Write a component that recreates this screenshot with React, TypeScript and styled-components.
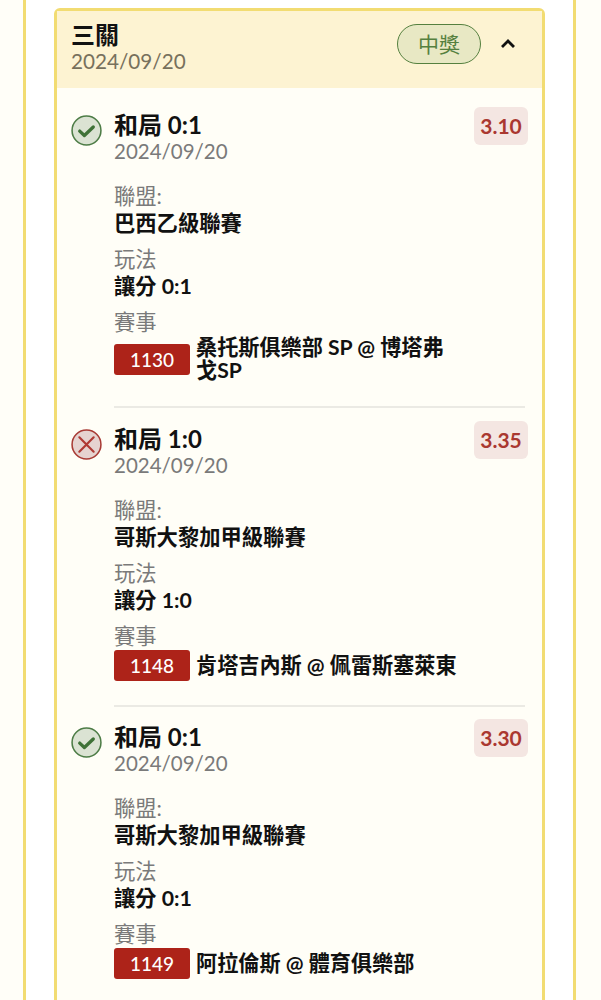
import React from "react";
import styled, { createGlobalStyle } from "styled-components";

const GlobalStyle = createGlobalStyle`
  html, body {
    margin: 0;
    padding: 0;
    background: #fffef8;
    overflow: hidden;
  }
  body {
    font-family: "Lato", "Noto Sans CJK TC", sans-serif;
    color: #111;
  }
`;

interface Bet {
  pick: string;
  date: string;
  league: string;
  play: string;
  code: string;
  match: string;
  odds: string;
  won: boolean;
}

const bets: Bet[] = [
  {
    pick: "和局 0:1",
    date: "2024/09/20",
    league: "巴西乙級聯賽",
    play: "讓分 0:1",
    code: "1130",
    match: "桑托斯俱樂部 SP @ 博塔弗戈SP",
    odds: "3.10",
    won: true,
  },
  {
    pick: "和局 1:0",
    date: "2024/09/20",
    league: "哥斯大黎加甲級聯賽",
    play: "讓分 1:0",
    code: "1148",
    match: "肯塔吉內斯 @ 佩雷斯塞萊東",
    odds: "3.35",
    won: false,
  },
  {
    pick: "和局 0:1",
    date: "2024/09/20",
    league: "哥斯大黎加甲級聯賽",
    play: "讓分 0:1",
    code: "1149",
    match: "阿拉倫斯 @ 體育俱樂部",
    odds: "3.30",
    won: true,
  },
];

const StatusIcon = ({ won }: { won: boolean }) =>
  won ? (
    <svg width="31" height="31" viewBox="0 0 32 32">
      <circle cx="16" cy="16" r="14.9" fill="#dbe3d3" stroke="#4d7c46" strokeWidth="1.6" />
      <path d="M9 16.6l4.8 4.6 9.2-8.8" fill="none" stroke="#3f7237" strokeWidth="3.4" strokeLinecap="round" strokeLinejoin="round" />
    </svg>
  ) : (
    <svg width="31" height="31" viewBox="0 0 32 32">
      <circle cx="16" cy="16" r="14.9" fill="#e6d3d0" stroke="#a83a34" strokeWidth="1.6" />
      <path d="M8.6 8.6l14.8 14.8M23.4 8.6L8.6 23.4" fill="none" stroke="#b03a34" strokeWidth="2.2" strokeLinecap="round" />
    </svg>
  );

const App = () => (
  <>
    <GlobalStyle />
    <Page>
      <OuterCard>
        <TicketCard>
          <TicketHeader>
            <div>
              <TicketTitle>三關</TicketTitle>
              <TicketDate>2024/09/20</TicketDate>
            </div>
            <HeaderRight>
              <ResultPill>中獎</ResultPill>
              <svg width="16" height="16" viewBox="0 0 16 16">
                <path d="M2 12l6-6 6 6" fill="none" stroke="#111" strokeWidth="2.8" />
              </svg>
            </HeaderRight>
          </TicketHeader>
          <TicketBody>
            {bets.map((bet, i) => (
              <BetRow key={i}>
                <IconCell>
                  <StatusIcon won={bet.won} />
                </IconCell>
                <BetMain $last={i === bets.length - 1}>
                  <BetTop>
                    <div>
                      <BetPick>{bet.pick}</BetPick>
                      <BetDate>{bet.date}</BetDate>
                    </div>
                    <Odds>{bet.odds}</Odds>
                  </BetTop>
                  <Label $first>聯盟:</Label>
                  <Value>{bet.league}</Value>
                  <Label>玩法</Label>
                  <Value>{bet.play}</Value>
                  <Label>賽事</Label>
                  <MatchRow>
                    <MatchCode>{bet.code}</MatchCode>
                    <MatchName>{bet.match}</MatchName>
                  </MatchRow>
                </BetMain>
              </BetRow>
            ))}
          </TicketBody>
        </TicketCard>
      </OuterCard>
    </Page>
  </>
);

export default App;

const Page = styled.div`
  width: 601px;
  height: 1000px;
  overflow: hidden;
  padding: 0 25px 0 23px;
  box-sizing: border-box;
`;

const OuterCard = styled.div`
  background: #ffffff;
  border-left: 3px solid #f2dc72;
  border-right: 3px solid #f2dc72;
  padding: 8px 28px 0;
  height: 100%;
  box-sizing: border-box;
`;

const TicketCard = styled.div`
  border: 3px solid #f2dc72;
  border-radius: 6px;
  background: #fffef7;
`;

const TicketHeader = styled.div`
  height: 77px;
  background: #fdf3d2;
  padding: 11px 26px 0 14px;
  box-sizing: border-box;
  display: flex;
  justify-content: space-between;
  align-items: flex-start;
`;

const TicketTitle = styled.div`
  font-size: 24px;
  line-height: 26px;
  font-weight: 700;
  color: #111;
`;

const TicketDate = styled.div`
  font-size: 20.7px;
  line-height: 26px;
  color: #77705c;
`;

const HeaderRight = styled.div`
  display: flex;
  align-items: center;
  gap: 19px;
  margin-top: 2px;

  svg {
    display: block;
    margin-top: -2px;
  }
`;

const ResultPill = styled.div`
  width: 84px;
  height: 40px;
  box-sizing: border-box;
  border: 1.5px solid #55803f;
  border-radius: 20px;
  background: #e8e8c4;
  color: #55803f;
  font-size: 21px;
  line-height: 37px;
  text-align: center;
`;

const TicketBody = styled.div`
  padding: 19px 17px 0 14px;
`;

const BetRow = styled.div`
  display: flex;
`;

const IconCell = styled.div`
  width: 43px;
  flex: none;
  padding-top: 8px;
  svg {
    display: block;
  }
`;

const BetMain = styled.div<{ $last?: boolean }>`
  flex: 1;
  min-width: 0;
  padding-bottom: 24px;
  margin-bottom: 12.5px;
  border-bottom: ${(p) => (p.$last ? "none" : "2px solid #ebeae4")};
`;

const BetTop = styled.div`
  display: flex;
  justify-content: space-between;
  align-items: flex-start;
`;

const BetPick = styled.div`
  font-size: 24px;
  line-height: 26px;
  font-weight: 700;
  margin-top: 5px;
`;

const BetDate = styled.div`
  font-size: 20.5px;
  line-height: 24px;
  margin-top: 1px;
  color: #7a7a7a;
`;

const Odds = styled.div`
  width: 54px;
  height: 38px;
  margin-right: -3px;
  border-radius: 6px;
  background: #f4e6e2;
  color: #aa3830;
  font-size: 21px;
  font-weight: 700;
  line-height: 38px;
  text-align: center;
`;

const Label = styled.div<{ $first?: boolean }>`
  font-size: 21.3px;
  line-height: 27px;
  color: #7a7a7a;
  margin-top: ${(p) => (p.$first ? "20px" : "10px")};
`;

const Value = styled.div`
  font-size: 21.3px;
  line-height: 26px;
  font-weight: 700;
  color: #111;
`;

const MatchRow = styled.div`
  display: flex;
  align-items: center;
  gap: 6px;
`;

const MatchCode = styled.div`
  flex: none;
  width: 76px;
  height: 31px;
  border-radius: 3px;
  background: #ad2319;
  color: #fff;
  font-size: 19px;
  font-weight: 500;
  line-height: 31px;
  text-align: center;
`;

const MatchName = styled.div`
  width: 264px;
  font-size: 21.15px;
  line-height: 23px;
  font-weight: 700;
  color: #111;
`;
